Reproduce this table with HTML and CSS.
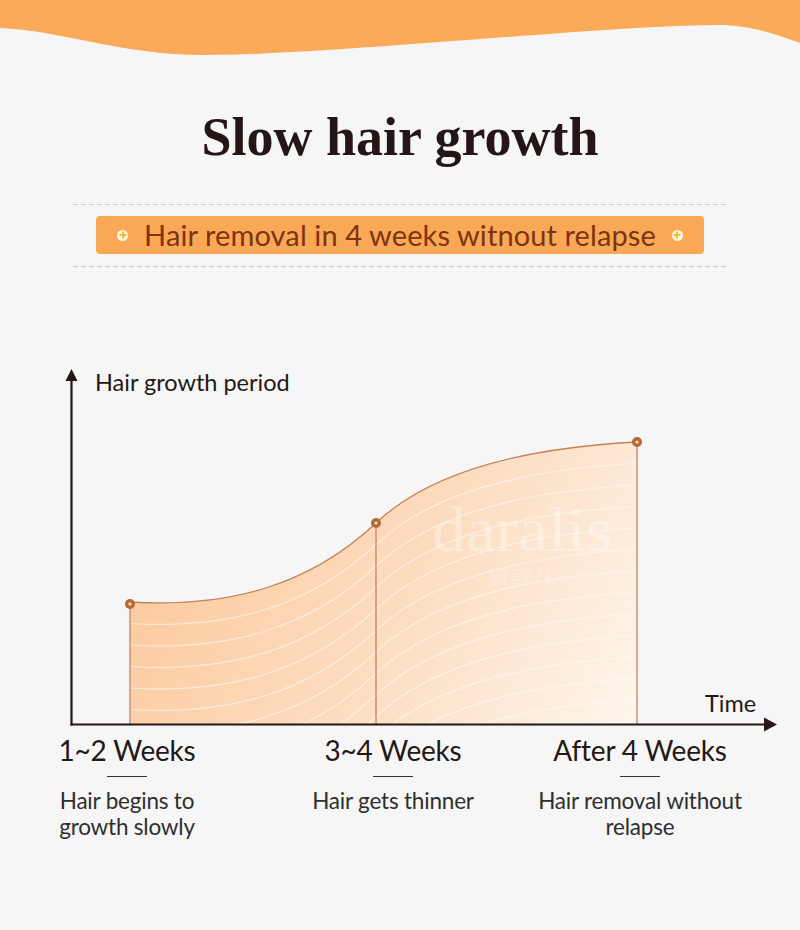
FILE: index.html
```html
<!DOCTYPE html>
<html lang="en">
<head>
<meta charset="utf-8">
<title>Slow hair growth</title>
<link rel="stylesheet" href="styles.css">
</head>
<body>
<div class="page">
  <svg class="wave" width="800" height="60" viewBox="0 0 800 60">
    <path d="M0,0 H800 V43 C770,32 745,24 714,25 C600,26 330,55 204,55 C120,55 60,30 0,28 Z" fill="#fbaa59"/>
  </svg>

  <h1 class="title">Slow hair growth</h1>

  <section class="tagline">
    <div class="dash"></div>
    <div class="banner">
      <span class="plus"></span>
      <span class="banner-text">Hair removal in 4 weeks witnout relapse</span>
      <span class="plus"></span>
    </div>
    <div class="dash"></div>
  </section>

  <svg class="chart" width="800" height="375" viewBox="0 0 800 375">
    <defs>
      <linearGradient id="fillGrad" x1="130" y1="82" x2="620" y2="364" gradientUnits="userSpaceOnUse">
        <stop offset="0" stop-color="#fcc597"/>
        <stop offset="0.55" stop-color="#fcdcbf"/>
        <stop offset="1" stop-color="#fef4ea"/>
      </linearGradient>
      <clipPath id="area">
        <path d="M130,242 C230,248 310,225 376,163 C430,112 520,88 637,82 L637,364 L130,364 Z"/>
      </clipPath>
    </defs>

    <path d="M130,242 C230,248 310,225 376,163 C430,112 520,88 637,82 L637,364 L130,364 Z" fill="url(#fillGrad)"/>

    <g clip-path="url(#area)" fill="none" stroke="#ffffff" stroke-opacity="0.55" stroke-width="1.2">
      <path d="M130,263.5 C230,269.5 310,246.5 376,184.5 C430,133.5 520,109.5 637,103.5"/>
      <path d="M130,285 C230,291 310,268 376,206 C430,155 520,131 637,125"/>
      <path d="M130,306.5 C230,312.5 310,289.5 376,227.5 C430,176.5 520,152.5 637,146.5"/>
      <path d="M130,328 C230,334 310,311 376,249 C430,198 520,174 637,168"/>
      <path d="M130,349.5 C230,355.5 310,332.5 376,270.5 C430,219.5 520,195.5 637,189.5"/>
      <path d="M130,371 C230,377 310,354 376,292 C430,241 520,217 637,211"/>
      <path d="M130,392.5 C230,398.5 310,375.5 376,313.5 C430,262.5 520,238.5 637,232.5"/>
      <path d="M130,414 C230,420 310,397 376,335 C430,284 520,260 637,254"/>
      <path d="M130,435.5 C230,441.5 310,418.5 376,356.5 C430,305.5 520,281.5 637,275.5"/>
      <path d="M130,457 C230,463 310,440 376,378 C430,327 520,303 637,297"/>
      <path d="M130,478.5 C230,484.5 310,461.5 376,399.5 C430,348.5 520,324.5 637,318.5"/>
      <path d="M130,500 C230,506 310,483 376,421 C430,370 520,346 637,340"/>
      <path d="M130,521.5 C230,527.5 310,504.5 376,442.5 C430,391.5 520,367.5 637,361.5"/>
    </g>

    <text class="wm" x="432" y="191" textLength="180" lengthAdjust="spacingAndGlyphs">daralis</text>
    <text class="wm-cn" x="487" y="224" textLength="68" lengthAdjust="spacingAndGlyphs">黛蔻儿</text>

    <path d="M130,242 C230,248 310,225 376,163 C430,112 520,88 637,82" fill="none" stroke="#c0835a" stroke-width="1.3"/>
    <g stroke="#c99170" stroke-width="1.5">
      <line x1="130" y1="244" x2="130" y2="364"/>
      <line x1="376" y1="163" x2="376" y2="364"/>
      <line x1="637" y1="82" x2="637" y2="364"/>
    </g>

    <g>
      <circle cx="130" cy="244" r="5" fill="#b66a33"/>
      <circle cx="130" cy="244" r="1.6" fill="#f5e3d3"/>
      <circle cx="376" cy="163" r="5" fill="#b66a33"/>
      <circle cx="376" cy="163" r="1.6" fill="#f5e3d3"/>
      <circle cx="637" cy="82" r="5" fill="#b66a33"/>
      <circle cx="637" cy="82" r="1.6" fill="#f5e3d3"/>
    </g>

    <g stroke="#231815" stroke-width="2.2">
      <line x1="71.5" y1="18" x2="71.5" y2="365.5"/>
      <line x1="70.5" y1="364.5" x2="766" y2="364.5"/>
    </g>
    <polygon points="71.5,9 65.5,21 77.5,21" fill="#231815"/>
    <polygon points="777,364.5 764,357.5 764,371.5" fill="#231815"/>

    <text class="axis-label" x="95" y="30.5">Hair growth period</text>
    <text class="axis-label" x="705" y="352">Time</text>
  </svg>

  <div class="stages">
    <div class="stage">
      <div class="stage-title">1~2 Weeks</div>
      <div class="rule"></div>
      <p class="stage-desc">Hair begins to<br>growth slowly</p>
    </div>
    <div class="stage">
      <div class="stage-title">3~4 Weeks</div>
      <div class="rule"></div>
      <p class="stage-desc">Hair gets thinner</p>
    </div>
    <div class="stage">
      <div class="stage-title">After 4 Weeks</div>
      <div class="rule"></div>
      <p class="stage-desc">Hair removal without<br>relapse</p>
    </div>
  </div>
</div>
</body>
</html>
```

FILE: styles.css
```css
html, body {
  margin: 0;
  padding: 0;
  background: #f6f6f6;
}

.page {
  width: 800px;
  height: 930px;
  overflow: hidden;
  background: #f6f6f6;
  font-family: Lato, "Noto Sans", sans-serif;
  color: #231815;
}

.wave {
  display: block;
}

.title {
  margin: 47px 0 0;
  text-align: center;
  font-family: "Liberation Serif", serif;
  font-weight: bold;
  font-size: 54px;
  line-height: 60px;
  color: #241617;
}

.tagline {
  width: 655px;
  margin: 37px auto 0;
  display: flex;
  flex-direction: column;
  align-items: center;
  gap: 11px;
}

.dash {
  align-self: stretch;
  height: 1px;
  background: repeating-linear-gradient(90deg, #c9c9c9 0 5px, transparent 5px 8px);
}

.banner {
  width: 608px;
  height: 38px;
  box-sizing: border-box;
  margin-bottom: 1px;
  background: #fba856;
  border-radius: 4px;
  display: flex;
  align-items: center;
  justify-content: center;
  gap: 16px;
}

.banner-text {
  font-size: 29px;
  line-height: 38px;
  color: #7c3411;
  font-weight: 400;
  letter-spacing: 0.1px;
}

.plus {
  position: relative;
  width: 11px;
  height: 11px;
  border-radius: 50%;
  background: #fff7e6;
  flex: none;
}

.plus::before,
.plus::after {
  content: "";
  position: absolute;
  background: #f4bd2c;
  left: 50%;
  top: 50%;
  transform: translate(-50%, -50%);
}

.plus::before {
  width: 7px;
  height: 2px;
}

.plus::after {
  width: 2px;
  height: 7px;
}

.chart {
  display: block;
  margin-top: 93px;
}

.axis-label {
  font-family: Lato, "Noto Sans", sans-serif;
  font-size: 23.5px;
  fill: #231815;
}

.wm {
  font-family: "Liberation Serif", serif;
  font-size: 64px;
  fill: #ffffff;
  fill-opacity: 0.35;
}

.wm-cn {
  font-family: "Noto Sans CJK SC", sans-serif;
  font-size: 17px;
  fill: #ffffff;
  fill-opacity: 0.3;
}

.stages {
  display: grid;
  grid-template-columns: 254px 278px 216px;
}

.stage {
  display: flex;
  flex-direction: column;
  align-items: center;
  text-align: center;
}

.stage-title {
  font-size: 28px;
  line-height: 30px;
  color: #231815;
  white-space: nowrap;
  letter-spacing: -0.2px;
}

.rule {
  width: 40px;
  height: 1px;
  background: #3a3030;
  margin-top: 11px;
}

.stage-desc {
  margin: 11px 0 0;
  font-size: 22.5px;
  line-height: 26px;
  font-weight: 400;
  color: #2e2e2e;
  white-space: nowrap;
  letter-spacing: -0.2px;
}
```
